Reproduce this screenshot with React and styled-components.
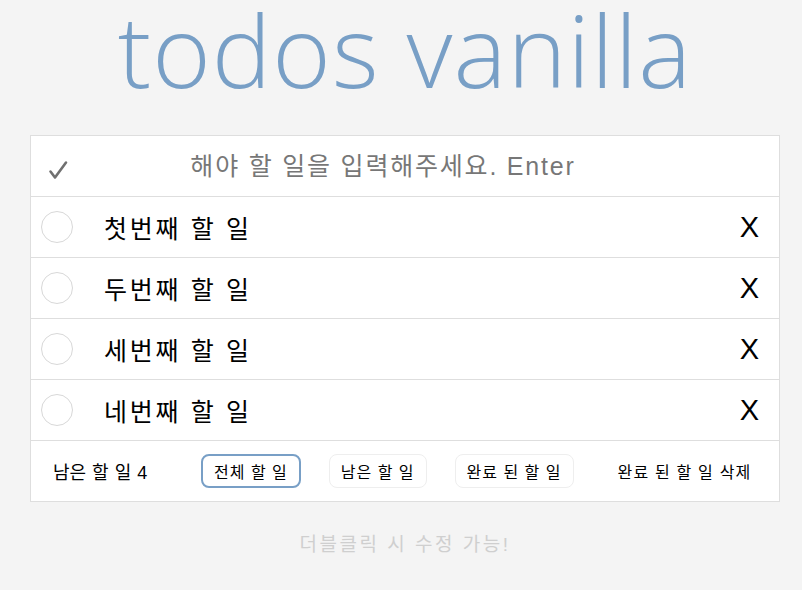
import React from 'react'
import styled, { createGlobalStyle } from 'styled-components'

const GlobalStyle = createGlobalStyle`
  * { box-sizing: border-box; }
  body {
    margin: 0;
    background: #f4f4f4;
    font-family: "Noto Sans", "Noto Sans CJK KR", sans-serif;
  }
`

const Page = styled.div`
  width: 802px;
  padding-left: 8px;
  display: flex;
  flex-direction: column;
  align-items: center;
`

const Title = styled.h1`
  margin: 0;
  height: 135px;
  font-family: "Open Sans", "Noto Sans", sans-serif;
  font-weight: 300;
  font-size: 100px;
  line-height: 98px;
  color: #789fc6;
  letter-spacing: 1px;
`

const Board = styled.section`
  width: 750px;
  background: #fff;
  border: 1px solid #dedede;
`

const InputRow = styled.div`
  height: 61px;
  display: flex;
  align-items: center;
  border-bottom: 1px solid #dedede;
`

const Check = styled.span`
  width: 60px;
  padding: 8px 0 0 17px;
  display: flex;
  align-items: center;
`

const Input = styled.input`
  flex: 1;
  border: none;
  outline: none;
  text-align: center;
  font-size: 25px;
  letter-spacing: 1.8px;
  font-family: "Liberation Sans", "Noto Sans CJK KR", sans-serif;
  padding: 0 104px 0 0;
  background: transparent;
  caret-color: #000;
  &::placeholder { color: #777; }
`

const Item = styled.div`
  height: 61px;
  display: flex;
  align-items: center;
  border-bottom: 1px solid #dedede;
  padding: 0 20px 0 10px;
`

const Circle = styled.span`
  width: 32px;
  height: 32px;
  border: 1px solid #d8d8d8;
  border-radius: 50%;
  flex: none;
`

const ItemText = styled.span`
  flex: 1;
  margin-left: 31px;
  font-size: 25px;
  letter-spacing: 2.7px;
  font-family: "Liberation Sans", "Noto Sans CJK KR", sans-serif;
  color: #000;
`

const Remove = styled.span`
  font-size: 29px;
  font-family: "Liberation Sans", sans-serif;
  color: #000;
`

const Footer = styled.div`
  height: 60px;
  display: flex;
  align-items: center;
  padding: 0 0 0 22px;
  font-family: "Liberation Sans", "Noto Sans CJK KR", sans-serif;
`

const Count = styled.span`
  font-size: 18px;
  letter-spacing: 0;
  word-spacing: 1px;
  width: 148px;
`

const FilterButton = styled.button`
  height: 34px;
  padding: 0 11px;
  margin-right: 28px;
  font-size: 16px;
  font-family: inherit;
  letter-spacing: 1px;
  background: #fff;
  color: #000;
  border: ${p => (p.$active ? '2px solid #789fc6' : '1px solid #eee')};
  border-radius: 8px;
`

const ClearButton = styled.button`
  margin-left: 16px;
  border: none;
  background: none;
  font-size: 16px;
  font-family: inherit;
  letter-spacing: 1.2px;
  color: #000;
  padding: 0;
`

const Hint = styled.p`
  margin: 27px 0 0;
  font-size: 19px;
  color: #cfcfcf;
  font-family: "Liberation Sans", "Noto Sans CJK KR", sans-serif;
  letter-spacing: 2.5px;
`

const todos = ['첫번째 할 일', '두번째 할 일', '세번째 할 일', '네번째 할 일']

export default function App() {
  return (
    <>
      <GlobalStyle />
      <Page>
        <Title>todos vanilla</Title>
        <Board>
          <InputRow>
            <Check>
              <svg width="20" height="20" viewBox="0 0 20 20">
                <path d="M2.5 11.5 L7 17.5 L18 2.5" fill="none" stroke="#707070" strokeWidth="2.6" strokeLinecap="round" strokeLinejoin="round" />
              </svg>
            </Check>
            <Input autoFocus placeholder="해야 할 일을 입력해주세요. Enter" />
          </InputRow>
          {todos.map(t => (
            <Item key={t}>
              <Circle />
              <ItemText>{t}</ItemText>
              <Remove>X</Remove>
            </Item>
          ))}
          <Footer>
            <Count>남은 할 일 4</Count>
            <FilterButton $active>전체 할 일</FilterButton>
            <FilterButton>남은 할 일</FilterButton>
            <FilterButton>완료 된 할 일</FilterButton>
            <ClearButton>완료 된 할 일 삭제</ClearButton>
          </Footer>
        </Board>
        <Hint>더블클릭 시 수정 가능!</Hint>
      </Page>
    </>
  )
}
